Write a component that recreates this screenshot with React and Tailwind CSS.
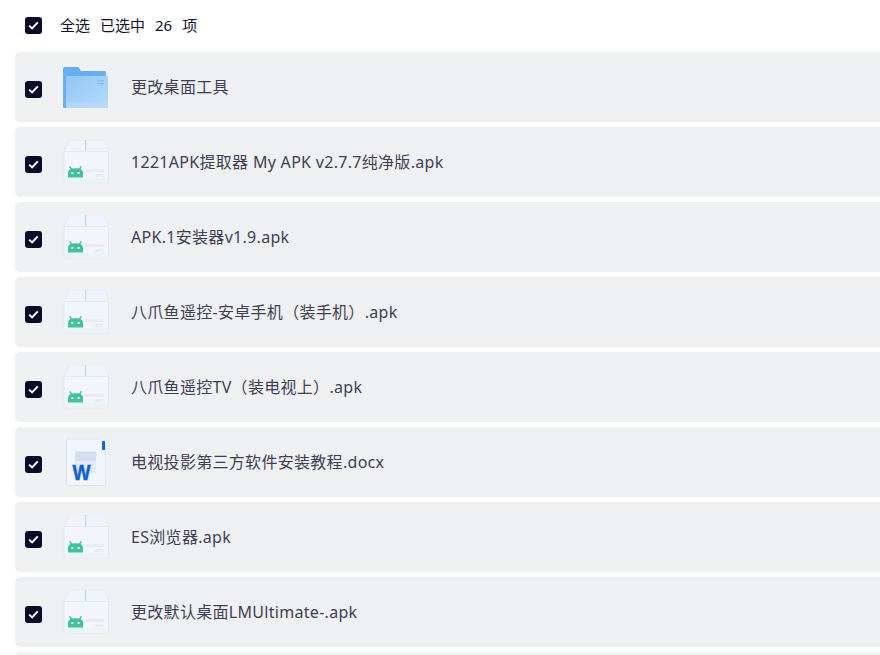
const files = [
  { name: "更改桌面工具", type: "folder" },
  { name: "1221APK提取器 My APK v2.7.7纯净版.apk", type: "apk" },
  { name: "APK.1安装器v1.9.apk", type: "apk" },
  { name: "八爪鱼遥控-安卓手机（装手机）.apk", type: "apk" },
  { name: "八爪鱼遥控TV（装电视上）.apk", type: "apk" },
  { name: "电视投影第三方软件安装教程.docx", type: "word" },
  { name: "ES浏览器.apk", type: "apk" },
  { name: "更改默认桌面LMUltimate-.apk", type: "apk" },
  { name: "", type: "none" },
];

function Check() {
  return (
    <span className="flex h-[17px] w-[17px] shrink-0 items-center justify-center rounded-[3px] bg-[#0b0a2a]">
      <svg width="11" height="9" viewBox="0 0 11 9" fill="none">
        <path d="M1.2 4.6 L4.1 7.4 L9.8 1.4" stroke="#fff" strokeWidth="2" />
      </svg>
    </span>
  );
}

function FolderIcon() {
  return (
    <svg width="46" height="44" viewBox="0 0 46 44">
      <defs>
        <linearGradient id="fg" x1="0" y1="0" x2="1" y2="1">
          <stop offset="0" stopColor="#8ec6f6" />
          <stop offset="1" stopColor="#b6dbfb" />
        </linearGradient>
      </defs>
      <path d="M0 3 Q0 1 2 1 H15 Q16 1 16.5 2.5 L18 5 H42 Q43 5 43 6.5 V20 H0 Z" fill="#66aeee" />
      <path d="M0 3 H4 V42 H1 Q0 42 0 41 Z" fill="#66aeee" />
      <path d="M3 11 Q3 10 4 10 H44 Q45 10 45 11 V40.5 Q45 42 43.5 42 H3 Z" fill="url(#fg)" />
      <rect x="3" y="36" width="42" height="6" fill="#b7dafa" opacity="0.7" />
      <rect x="34" y="14" width="7" height="1.2" fill="#84bdf0" />
      <rect x="34" y="17" width="7" height="1.2" fill="#84bdf0" />
    </svg>
  );
}

function ApkIcon() {
  return (
    <svg width="46" height="46" viewBox="0 1 46 46">
      <path d="M1 12.5 L6 2 Q6.5 1 8 1 H41 Q41.5 1 42 2 L45.5 12.5 Z" fill="#f0f3fb" stroke="#e6eaf4" strokeWidth="1" />
      <rect x="22" y="1" width="1.2" height="11" fill="#b0e4d8" />
      <path d="M1 12.5 H45.5 V41.5 Q45.5 44 43 44 H3.5 Q1 44 1 41.5 Z" fill="#f3f5fc" stroke="#e4e8f3" strokeWidth="1" />
      <path d="M1.5 39 H45 V41.5 Q45 43.5 43 43.5 H3.5 Q1.5 43.5 1.5 41.5 Z" fill="#e8f5f4" />
      <path d="M5 38.6 V33.5 Q5 31 7.5 30 L6 27.6 L7.2 27 L9 29.6 Q12.5 28.8 16 29.6 L17.8 27 L19 27.6 L17.5 30 Q20 31 20 33.5 V38.6 Z" fill="#41c29b" />
      <rect x="8.2" y="33" width="2.4" height="2" rx="0.8" fill="#f3f5fc" />
      <rect x="14.4" y="33" width="2.4" height="2" rx="0.8" fill="#f3f5fc" />
      <text x="22" y="32.5" fontFamily="'Liberation Sans', sans-serif" fontSize="4.2" fontWeight="700" fill="#e0e4ee">ANDROID</text>
      <text x="32" y="37.5" fontFamily="'Liberation Sans', sans-serif" fontSize="4.2" fontWeight="700" fill="#e0e4ee">APK</text>
    </svg>
  );
}

function WordIcon() {
  return (
    <svg width="46" height="50" viewBox="0 0 46 50">
      <path d="M5 1 H36 Q37 1 38 2 L41.5 5.5 Q42.5 6.5 42.5 8 V45 Q42.5 47.5 40 47.5 H6 Q3.5 47.5 3.5 45 V3.5 Q3.5 1 5 1 Z" fill="#f2f5fc" stroke="#d9e5f6" strokeWidth="1" />
      <rect x="39" y="3" width="3" height="9" rx="0.5" fill="#1565d8" />
      <rect x="12" y="13.5" width="21" height="10" fill="#d3def4" />
      <rect x="12" y="23.5" width="21" height="11" fill="#e3eaf8" />
      <text x="9.5" y="41.5" textLength="18" lengthAdjust="spacingAndGlyphs" fontFamily="'Liberation Sans', sans-serif" fontWeight="700" fontSize="22" stroke="#0f5fd6" strokeWidth="0.5" fill="#0f5fd6">W</text>
    </svg>
  );
}

function Icon({ type }) {
  if (type === "folder") return <FolderIcon />;
  if (type === "apk") return <ApkIcon />;
  if (type === "word") return <WordIcon />;
  return null;
}

export default function App() {
  return (
    <div className="h-[655px] w-[880px] overflow-hidden bg-white font-['Noto_Sans','Noto_Sans_CJK_SC',sans-serif]">
      <div className="flex h-[51px] items-center pl-[25px] text-[15px] text-[#10102e]">
        <Check />
        <span className="ml-[18px]">全选</span>
        <span className="ml-[10px]">已选中</span>
        <span className="ml-[10px]">26</span>
        <span className="ml-[10px]">项</span>
      </div>
      <div className="ml-[15px] mt-px flex w-[880px] flex-col gap-[5px]">
        {files.map((f, i) => (
          <div key={i} className="flex h-[70px] shrink-0 items-center rounded-[5px] bg-[#eff0f2] pl-[10px]">
            {f.type !== "none" && (
              <>
                <div className="mt-[4px]"><Check /></div>
                <div className="ml-[21px] mt-px flex w-[46px] shrink-0 justify-center"><Icon type={f.type} /></div>
                <span className="ml-[22px] text-base tracking-[0.3px] text-[#3e3f55]">{f.name}</span>
              </>
            )}
          </div>
        ))}
      </div>
    </div>
  );
}
